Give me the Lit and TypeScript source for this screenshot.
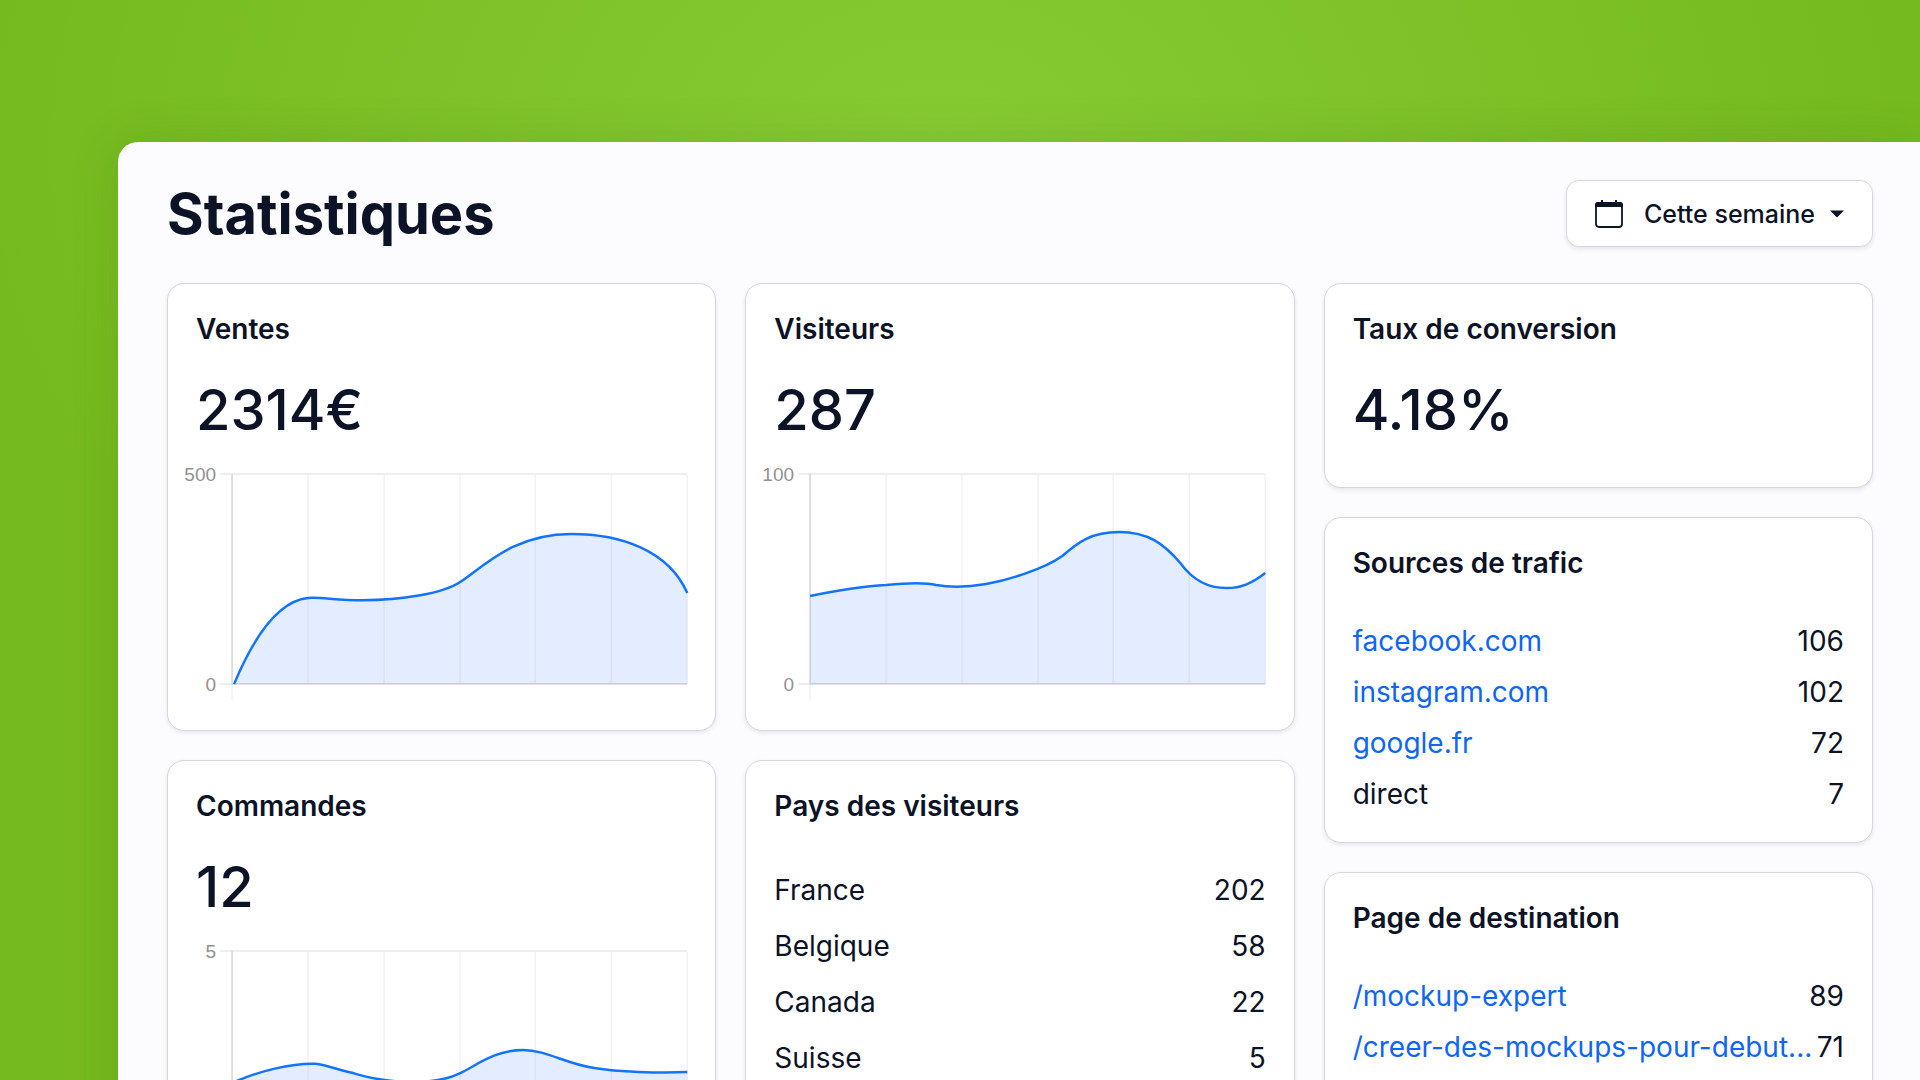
import { LitElement, html, css, svg, nothing } from "lit";
import { customElement, property } from "lit/decorators.js";

type Row = { label: string; value: number; href?: string };

@customElement("stat-card")
class StatCard extends LitElement {
  @property() heading = "";
  @property() value = "";

  static styles = css`
    :host {
      display: block;
      box-sizing: border-box;
      padding-bottom: 23px;
      background: #fff;
      border: 1px solid #d6d6df;
      border-radius: 17px;
      box-shadow: 0 2px 4px rgba(30, 30, 60, 0.1);
    }
    .heading {
      margin: 0;
      padding: 26px 28px 0;
      font-size: 28px;
      line-height: 38px;
      font-weight: 600;
    }
    .value {
      margin: 0;
      padding: 28px 28px 20px;
      font-size: 56px;
      line-height: 68px;
      font-weight: 500;
    }
  `;

  render() {
    return html`
      <h2 class="heading">${this.heading}</h2>
      ${this.value ? html`<p class="value">${this.value}</p>` : nothing}
      <slot></slot>
    `;
  }
}

@customElement("area-chart")
class AreaChart extends LitElement {
  @property() max = "";
  @property() curve = "";
  @property() label = "";

  static styles = css`
    :host {
      display: block;
      padding: 6px 0 5px;
    }
    .chart {
      display: block;
      width: 100%;
      height: auto;
      overflow: visible;
    }
    .tick {
      font-family: "Liberation Sans", Arial, sans-serif;
      font-size: 19px;
      fill: #919191;
      text-anchor: end;
    }
    .grid {
      stroke: #f2f2f6;
      stroke-width: 1.5;
    }
    .top {
      stroke: #e8e8ec;
      stroke-width: 1.5;
    }
    .axis {
      stroke: #d4d4da;
      stroke-width: 1.5;
    }
    .area {
      fill: #0d5bff;
      fill-opacity: 0.11;
    }
    .line {
      fill: none;
      stroke: #1273ff;
      stroke-width: 2.5;
    }
  `;

  render() {
    const columns = [140, 216, 292, 367, 443, 519];
    return html`
      <svg class="chart" viewBox="0 8 547 232" role="img" aria-label=${this.label}>
        ${columns.map((x) => svg`<line class="grid" x1=${x} x2=${x} y1="13" y2="222"></line>`)}
        <line class="grid" x1="64" x2="64" y1="222" y2="238"></line>
        <line class="top" x1="52" x2="519" y1="12" y2="12"></line>
        <line class="top" x1="52" x2="64" y1="222" y2="222"></line>
        <path class="axis" fill="none" d="M64 12V222H519"></path>
        <path class="area" d="${this.curve} V222 H64 Z"></path>
        <path class="line" d=${this.curve}></path>
        <text class="tick" x="48" y="19">${this.max}</text>
        <text class="tick" x="48" y="229">0</text>
      </svg>
    `;
  }
}

@customElement("stat-table")
class StatTable extends LitElement {
  @property({ attribute: false }) rows: Row[] = [];
  @property({ type: Boolean, reflect: true }) roomy = false;
  @property() label = "";

  static styles = css`
    :host {
      display: block;
      padding: 33px 28px 0;
    }
    :host([roomy]) {
      padding-top: 37px;
    }
    .table,
    .body {
      display: block;
      font-size: 28px;
      line-height: 34px;
    }
    .row {
      display: flex;
      align-items: center;
      justify-content: space-between;
      height: 51px;
    }
    :host([roomy]) .row {
      height: 56px;
    }
    .name {
      padding: 0;
      font-weight: 400;
      text-align: left;
      white-space: nowrap;
    }
    .count {
      padding: 0;
      text-align: right;
    }
    .link {
      color: #0d66f5;
      text-decoration: none;
    }
  `;

  render() {
    return html`
      <table class="table" aria-label=${this.label}>
        <tbody class="body">
          ${this.rows.map(
            (r) => html`<tr class="row">
              <th class="name" scope="row">
                ${r.href ? html`<a class="link" href=${r.href}>${r.label}</a>` : r.label}
              </th>
              <td class="count">${r.value}</td>
            </tr>`
          )}
        </tbody>
      </table>
    `;
  }
}

@customElement("app-root")
class AppRoot extends LitElement {
  static styles = css`
    :host {
      display: block;
      box-sizing: border-box;
      height: 100vh;
      overflow: hidden;
      padding: 142px 0 0 118px;
      background: radial-gradient(ellipse 960px 700px at 940px 150px, #87cb33 0%, #75ba1e 100%);
      font-family: Inter, "Liberation Sans", sans-serif;
      color: #0c1326;
    }
    .panel {
      box-sizing: border-box;
      min-height: 100%;
      padding: 38px 47px 48px 49px;
      border-top-left-radius: 20px;
      background: #fcfcff;
      box-shadow: 0 0 50px rgba(40, 80, 0, 0.14);
    }
    .header {
      display: flex;
      align-items: flex-start;
      justify-content: space-between;
      margin-bottom: 35px;
    }
    .title {
      margin: 0;
      font-size: 56px;
      line-height: 68px;
      font-weight: 700;
    }
    .period {
      display: flex;
      align-items: center;
      height: 67px;
      padding: 0 28px;
      border: 1px solid #d6d6df;
      border-radius: 13px;
      background: #fff;
      box-shadow: 0 2px 4px rgba(30, 30, 60, 0.1);
      color: inherit;
      font: 500 25px/32px Inter, "Liberation Sans", sans-serif;
    }
    .calendar {
      width: 28px;
      height: 28px;
      margin-right: 21px;
    }
    .caret {
      width: 14px;
      height: 8px;
      margin-left: 15px;
    }
    .columns {
      display: grid;
      grid-template-columns: repeat(3, minmax(0, 1fr));
      align-items: start;
      gap: 29px;
    }
    .column {
      display: flex;
      flex-direction: column;
      gap: 29px;
    }
  `;

  render() {
    return html`
      <main class="panel">
        <header class="header">
          <h1 class="title">Statistiques</h1>
          <button class="period" type="button" aria-haspopup="listbox">
            <svg class="calendar" viewBox="0 0 28 28" aria-hidden="true">
              <rect x="1" y="3" width="26" height="24" rx="3" fill="none" stroke="currentColor" stroke-width="1.8"></rect>
              <path d="M0 7V5a3 3 0 0 1 3-3h3V0h2V2H20V0h2V2h3a3 3 0 0 1 3 3v2z" fill="currentColor"></path>
            </svg>
            Cette semaine
            <svg class="caret" viewBox="0 0 14 8" aria-hidden="true">
              <path d="M0 0.500h14L7 7.500z" fill="currentColor"></path>
            </svg>
          </button>
        </header>
        <div class="columns">
          <div class="column">
            <stat-card heading="Ventes" value="2314€">
              <area-chart
                max="500"
                label="Ventes"
                curve="M66 222C84 179 108 139 140 136C150 134.500 168 138.300 194 138.300C232 138 274 132 292 120C314 106 344 72 403 72C452 72 500 88 519 131"
              ></area-chart>
            </stat-card>
            <stat-card heading="Commandes" value="12">
              <area-chart
                max="5"
                label="Commandes"
                curve="M64 144C90 132 124 124 147 124.600C160 126 170 131 185 134C200 139 225 143 244 143C262 143 280 140 292 134C306 128 325 111 355 111C378 111 398 125 426 129C450 133 490 134 519 133"
              ></area-chart>
            </stat-card>
          </div>
          <div class="column">
            <stat-card heading="Visiteurs" value="287">
              <area-chart
                max="100"
                label="Visiteurs"
                curve="M64 134C88 129 118 124 140 123C160 121 178 120 190 123C202 125 222 125 240 122C262 118 298 107 316 94C332 80 345 70 373 70C402 70 418 82 434 101C448 120 463 126 480 126C495 126 506 121 519 111"
              ></area-chart>
            </stat-card>
            <stat-card heading="Pays des visiteurs">
              <stat-table
                roomy
                label="Pays des visiteurs"
                .rows=${[
                  { label: "France", value: 202 },
                  { label: "Belgique", value: 58 },
                  { label: "Canada", value: 22 },
                  { label: "Suisse", value: 5 },
                ]}
              ></stat-table>
            </stat-card>
          </div>
          <div class="column">
            <stat-card heading="Taux de conversion" value="4.18%"></stat-card>
            <stat-card heading="Sources de trafic">
              <stat-table
                label="Sources de trafic"
                .rows=${[
                  { label: "facebook.com", value: 106, href: "#facebook" },
                  { label: "instagram.com", value: 102, href: "#instagram" },
                  { label: "google.fr", value: 72, href: "#google" },
                  { label: "direct", value: 7 },
                ]}
              ></stat-table>
            </stat-card>
            <stat-card heading="Page de destination">
              <stat-table
                label="Page de destination"
                .rows=${[
                  { label: "/mockup-expert", value: 89, href: "#mockup-expert" },
                  { label: "/creer-des-mockups-pour-debut...", value: 71, href: "#creer-des-mockups" },
                ]}
              ></stat-table>
            </stat-card>
          </div>
        </div>
      </main>
    `;
  }
}
